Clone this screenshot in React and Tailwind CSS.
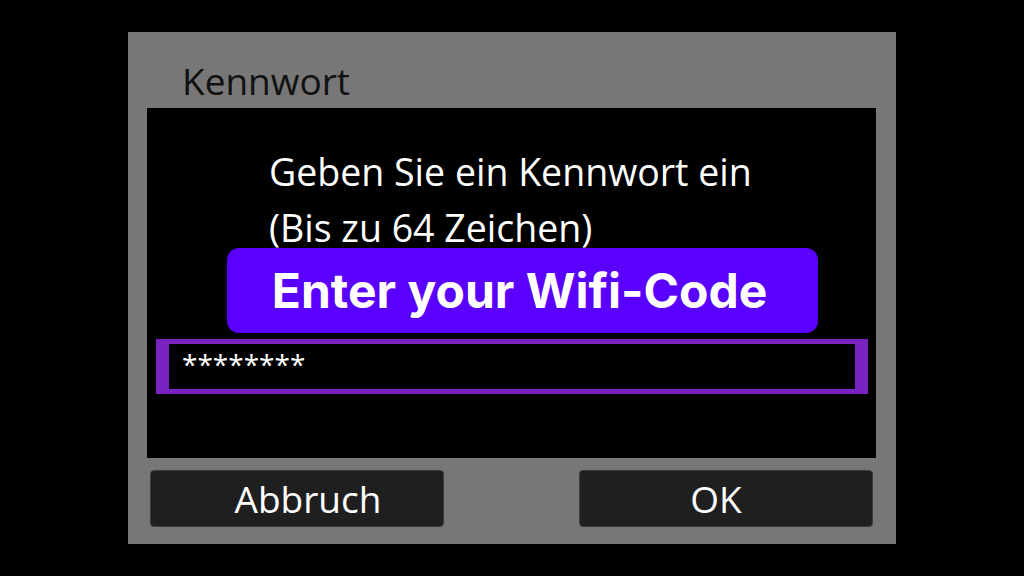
export default function App() {
  return (
    <div className="w-[1024px] h-[576px] bg-black overflow-hidden pt-[32px]" style={{ fontFamily: '"Open Sans", "Noto Sans", sans-serif' }}>
      <div className="mx-auto w-[768px] h-[512px] bg-[#777777] flex flex-col">
        <div className="h-[76px] pt-[22px] pl-[54px] text-[37px] leading-[54px] text-[#111111]">Kennwort</div>

        <div className="relative mx-[19px] mr-[20px] h-[350px] bg-black pt-[36px]">
          <div className="pl-[122px] text-white text-[37.5px] leading-[56px]">
            <p>Geben Sie ein Kennwort ein</p>
            <p>(Bis zu 64 Zeichen)</p>
          </div>

          <div className="absolute left-[80px] top-[140px] w-[591px] h-[85px] rounded-[12px] bg-[#5a00ff] flex items-center justify-center pr-[6px]">
            <span className="text-white font-bold text-[48px]" style={{ fontFamily: 'Inter, "DejaVu Sans", sans-serif' }}>
              Enter your Wifi-Code
            </span>
          </div>

          <div className="mt-[83px] ml-[9px] mr-[8px] h-[55px] border-x-[13px] border-y-[5px] border-[#7a22c2] bg-black pl-[13px] text-white text-[28px] leading-[40px]">
            ********
          </div>
        </div>

        <div className="mt-[12px] flex justify-between px-[22px] pr-[23px]">
          <button className="w-[294px] h-[57px] rounded-[4px] bg-[#1f1f1f] border border-[#3c3c3c] text-white text-[37px] leading-[55px] pl-[22px]">
            Abbruch
          </button>
          <button className="w-[294px] h-[57px] rounded-[4px] bg-[#1f1f1f] border border-[#3c3c3c] text-white text-[37px] leading-[55px] pr-[20px]">
            OK
          </button>
        </div>
      </div>
    </div>
  )
}
